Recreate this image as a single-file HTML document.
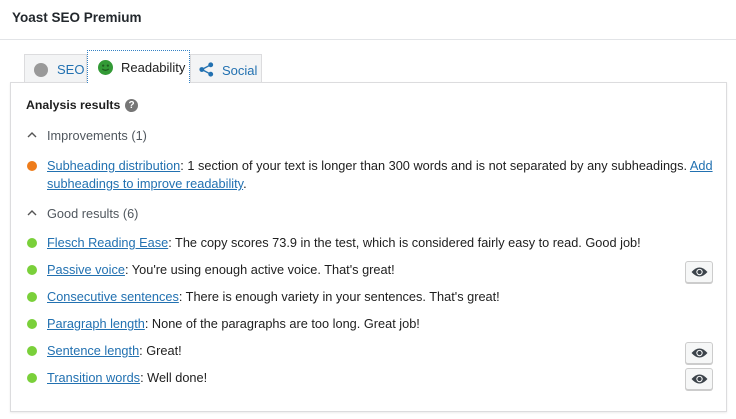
<!DOCTYPE html>
<html><head><style>
body{margin:0;width:736px;height:419px;background:#fff;font-family:"Liberation Sans",sans-serif;color:#1e1e1e;position:relative;overflow:hidden}
.hdr{position:absolute;left:0;top:0;width:736px;height:39px;border-bottom:1px solid #e2e4e7}
.hdr span{position:absolute;left:12px;top:10px;font-size:13.5px;font-weight:bold;color:#23282d}
.tab{position:absolute;top:54px;height:28px;background:#f3f4f5;border:1px solid #dcdcde;border-bottom:none;box-sizing:border-box;font-size:13px;color:#2271b1}
.tab span{position:absolute;top:7px}
.act{background:#fff;border:1px dotted #3582c4;border-bottom:none;top:50px;height:33px;color:#1e1e1e;z-index:2}
.panel{position:absolute;left:10px;top:82px;width:717px;height:330px;border:1px solid #dcdcde;box-shadow:0 1px 2px rgba(0,0,0,.08);background:#fff;box-sizing:border-box}
.t{position:absolute;font-size:12.75px;white-space:nowrap}
a{color:#2271b1;text-decoration:underline}
.dot{position:absolute;left:27px;width:10px;height:10px;border-radius:50%}
.g{background:#7ad03a}.o{background:#ee7c1b}
.eye{position:absolute;left:685px;width:28px;height:22px;border:1px solid #ccc;border-radius:3px;background:#f6f7f7;box-sizing:border-box;box-shadow:0 1px 0 #ccc}
.eye svg{position:absolute;left:5px;top:4px}
.car{position:absolute;left:27px}
</style></head><body>
<div class="hdr"><span>Yoast SEO Premium</span></div>
<div class="tab" style="left:24px;width:63px"><div style="position:absolute;left:9px;top:8px;width:14px;height:14px;border-radius:50%;background:#999"></div><span style="left:32px">SEO</span></div>
<div class="tab act" style="left:87px;width:103px"><svg style="position:absolute;left:10px;top:9px" width="15" height="15" viewBox="0 0 16 16"><circle cx="8" cy="8" r="8" fill="#339a36"/><circle cx="5.5" cy="6" r="1.2" fill="#1e5d1f"/><circle cx="10.5" cy="6" r="1.2" fill="#1e5d1f"/><path d="M4.5 9.5q3.5 3 7 0" stroke="#1e5d1f" stroke-width="1.3" fill="none"/></svg><span style="left:33px;top:9px">Readability</span></div>
<div class="tab" style="left:190px;width:72px"><svg style="position:absolute;left:8px;top:7px" width="15" height="15" viewBox="0 0 16 16"><circle cx="12.5" cy="3" r="2.6" fill="#2271b1"/><circle cx="3" cy="8" r="2.6" fill="#2271b1"/><circle cx="12.5" cy="13" r="2.6" fill="#2271b1"/><path d="M12.5 3L3 8l9.5 5" stroke="#2271b1" stroke-width="1.5" fill="none"/></svg><span style="left:31px;top:8px">Social</span></div>
<div class="panel"></div>
<div class="t" style="left:26px;top:98px;font-weight:bold;font-size:12.3px">Analysis results</div>
<div style="position:absolute;left:125px;top:99px;width:13px;height:13px;border-radius:50%;background:#767676;color:#fff;font-size:10px;font-weight:bold;text-align:center;line-height:13px">?</div>
<svg class="car" style="top:131px" width="10" height="7" viewBox="0 0 10 7"><path d="M1 6L5 2l4 4" stroke="#555" stroke-width="1.4" fill="none"/></svg><div class="t" style="left:47px;top:128px;color:#50575e">Improvements (1)</div>
<div class="dot o" style="top:161px"></div>
<div class="t" style="left:47px;top:158px"><a>Subheading distribution</a>: 1 section of your text is longer than 300 words and is not separated by any subheadings. <a>Add</a></div>
<div class="t" style="left:47px;top:176px"><a>subheadings to improve readability</a>.</div>
<svg class="car" style="top:209px" width="10" height="7" viewBox="0 0 10 7"><path d="M1 6L5 2l4 4" stroke="#555" stroke-width="1.4" fill="none"/></svg><div class="t" style="left:47px;top:206px;color:#50575e">Good results (6)</div>
<div class="dot g" style="top:238px"></div><div class="t" style="left:47px;top:235px"><a>Flesch Reading Ease</a>: The copy scores 73.9 in the test, which is considered fairly easy to read. Good job!</div>
<div class="dot g" style="top:265px"></div><div class="t" style="left:47px;top:262px"><a>Passive voice</a>: You're using enough active voice. That's great!</div>
<div class="dot g" style="top:292px"></div><div class="t" style="left:47px;top:289px"><a>Consecutive sentences</a>: There is enough variety in your sentences. That's great!</div>
<div class="dot g" style="top:319px"></div><div class="t" style="left:47px;top:316px"><a>Paragraph length</a>: None of the paragraphs are too long. Great job!</div>
<div class="dot g" style="top:346px"></div><div class="t" style="left:47px;top:343px"><a>Sentence length</a>: Great!</div>
<div class="dot g" style="top:373px"></div><div class="t" style="left:47px;top:370px"><a>Transition words</a>: Well done!</div>
<div class="eye" style="top:261px"><svg width="17" height="12" viewBox="0 0 16 11"><path d="M0.5 5.5Q8-3 15.5 5.5Q8 14 0.5 5.5Z" fill="#3c434a"/><circle cx="8" cy="5.5" r="3" fill="#f6f7f7"/><circle cx="8" cy="5.5" r="2" fill="#3c434a"/></svg></div>
<div class="eye" style="top:342px"><svg width="17" height="12" viewBox="0 0 16 11"><path d="M0.5 5.5Q8-3 15.5 5.5Q8 14 0.5 5.5Z" fill="#3c434a"/><circle cx="8" cy="5.5" r="3" fill="#f6f7f7"/><circle cx="8" cy="5.5" r="2" fill="#3c434a"/></svg></div>
<div class="eye" style="top:368px"><svg width="17" height="12" viewBox="0 0 16 11"><path d="M0.5 5.5Q8-3 15.5 5.5Q8 14 0.5 5.5Z" fill="#3c434a"/><circle cx="8" cy="5.5" r="3" fill="#f6f7f7"/><circle cx="8" cy="5.5" r="2" fill="#3c434a"/></svg></div>
</body></html>
